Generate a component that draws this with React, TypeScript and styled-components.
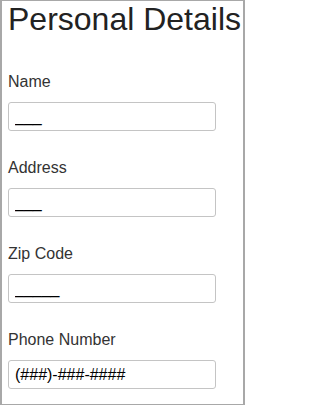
import type { FC } from 'react'
import styled, { createGlobalStyle } from 'styled-components'

const GlobalStyle = createGlobalStyle`
  html, body {
    margin: 0;
    padding: 0;
    background: #ffffff;
  }
  body {
    font-family: "Liberation Sans", Arial, sans-serif;
  }
`

const fields: Field[] = [
  { label: 'Name', value: '___' },
  { label: 'Address', value: '___' },
  { label: 'Zip Code', value: '_____' },
  { label: 'Phone Number', value: '(###)-###-####' },
]

const App: FC = () => {
  return (
    <>
      <GlobalStyle />
      <Frame>
        <Heading>Personal Details</Heading>
        <Form>
          {fields.map((field) => (
            <FieldRow key={field.label}>
              <Label>{field.label}</Label>
              <Input type="text" defaultValue={field.value} readOnly />
            </FieldRow>
          ))}
        </Form>
      </Frame>
    </>
  )
}

interface Field {
  label: string
  value: string
}

const Frame = styled.div`
  box-sizing: border-box;
  width: 245px;
  height: 405px;
  border-style: solid;
  border-color: #a8a8a8;
  border-width: 1px 2px;
  padding: 0 0 0 6px;
  overflow: hidden;
`

const Heading = styled.h1`
  margin: 0;
  font-size: 32px;
  line-height: 36px;
  font-weight: normal;
  color: #222222;
  white-space: nowrap;
`

const Form = styled.form`
  display: flex;
  flex-direction: column;
  margin-top: 36px;
`

const FieldRow = styled.div`
  display: flex;
  flex-direction: column;
  align-items: flex-start;
  height: 86px;
`

const Label = styled.label`
  font-size: 16px;
  line-height: 18px;
  color: #333333;
`

const Input = styled.input`
  box-sizing: border-box;
  margin-top: 11px;
  width: 208px;
  height: 29px;
  padding: 0 6px;
  border: 1px solid #c4c4c4;
  border-radius: 3px;
  font-family: "Liberation Sans", Arial, sans-serif;
  font-size: 16px;
  color: #000000;
  background: #ffffff;
  outline: none;
`

export default App
